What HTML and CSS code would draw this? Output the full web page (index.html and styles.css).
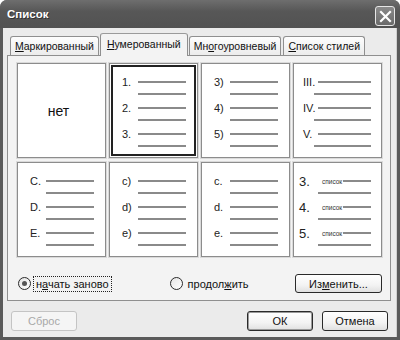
FILE: index.html
```html
<!DOCTYPE html>
<html lang="ru">
<head>
    <meta charset="UTF-8">
    <title>Список</title>
    <link rel="stylesheet" href="styles.css">
</head>
<body>

<div class="window">
    <div class="titlebar">
        <span class="title">Список</span>
        <button class="close-btn">
            <svg width="13" height="13" viewBox="0 0 13 13">
                <path d="M2 2 L11 11 M11 2 L2 11" stroke="#fff" stroke-width="2.2" stroke-linecap="square"/>
            </svg>
        </button>
    </div>

    <div class="client">
        <div class="tabs">
            <div class="tab"><u>М</u>аркированный</div>
            <div class="tab active"><u>Н</u>умерованный</div>
            <div class="tab">Мн<u>о</u>гоуровневый</div>
            <div class="tab"><u>С</u>писок стилей</div>
        </div>

        <div class="panel">
            <div class="gallery">
                <div class="cell cell-none">нет</div>

                <div class="cell selected">
                    <div class="item"><div class="item-head"><span class="num">1.</span><span class="rule"></span></div><span class="rule rule2"></span></div>
                    <div class="item"><div class="item-head"><span class="num">2.</span><span class="rule"></span></div><span class="rule rule2"></span></div>
                    <div class="item"><div class="item-head"><span class="num">3.</span><span class="rule"></span></div><span class="rule rule2"></span></div>
                </div>

                <div class="cell">
                    <div class="item"><div class="item-head"><span class="num">3)</span><span class="rule"></span></div><span class="rule rule2"></span></div>
                    <div class="item"><div class="item-head"><span class="num">4)</span><span class="rule"></span></div><span class="rule rule2"></span></div>
                    <div class="item"><div class="item-head"><span class="num">5)</span><span class="rule"></span></div><span class="rule rule2"></span></div>
                </div>

                <div class="cell roman">
                    <div class="item"><div class="item-head"><span class="num">III.</span><span class="rule"></span></div><span class="rule rule2"></span></div>
                    <div class="item"><div class="item-head"><span class="num">IV.</span><span class="rule"></span></div><span class="rule rule2"></span></div>
                    <div class="item"><div class="item-head"><span class="num">V.</span><span class="rule"></span></div><span class="rule rule2"></span></div>
                </div>

                <div class="cell">
                    <div class="item"><div class="item-head"><span class="num">C.</span><span class="rule"></span></div><span class="rule rule2"></span></div>
                    <div class="item"><div class="item-head"><span class="num">D.</span><span class="rule"></span></div><span class="rule rule2"></span></div>
                    <div class="item"><div class="item-head"><span class="num">E.</span><span class="rule"></span></div><span class="rule rule2"></span></div>
                </div>

                <div class="cell">
                    <div class="item"><div class="item-head"><span class="num">c)</span><span class="rule"></span></div><span class="rule rule2"></span></div>
                    <div class="item"><div class="item-head"><span class="num">d)</span><span class="rule"></span></div><span class="rule rule2"></span></div>
                    <div class="item"><div class="item-head"><span class="num">e)</span><span class="rule"></span></div><span class="rule rule2"></span></div>
                </div>

                <div class="cell">
                    <div class="item"><div class="item-head"><span class="num">c.</span><span class="rule"></span></div><span class="rule rule2"></span></div>
                    <div class="item"><div class="item-head"><span class="num">d.</span><span class="rule"></span></div><span class="rule rule2"></span></div>
                    <div class="item"><div class="item-head"><span class="num">e.</span><span class="rule"></span></div><span class="rule rule2"></span></div>
                </div>

                <div class="cell styled">
                    <div class="item"><div class="item-head"><span class="num">3.</span><span class="tag">список</span><span class="rule"></span></div><span class="rule rule2"></span></div>
                    <div class="item"><div class="item-head"><span class="num">4.</span><span class="tag">список</span><span class="rule"></span></div><span class="rule rule2"></span></div>
                    <div class="item"><div class="item-head"><span class="num">5.</span><span class="tag">список</span><span class="rule"></span></div><span class="rule rule2"></span></div>
                </div>
            </div>

            <div class="options">
                <label class="radio">
                    <span class="radio-dot checked"></span>
                    <span class="radio-text focused">н<u>а</u>чать заново</span>
                </label>
                <label class="radio">
                    <span class="radio-dot"></span>
                    <span class="radio-text">продол<u>ж</u>ить</span>
                </label>
                <button class="btn btn-change">Из<u>м</u>енить...</button>
            </div>
        </div>

        <div class="footer">
            <button class="btn" disabled>Сброс</button>
            <button class="btn btn-default">ОК</button>
            <button class="btn">Отмена</button>
        </div>
    </div>
</div>

</body>
</html>
```

FILE: styles.css
```css
body {
    margin: 0;
    padding: 0;
    background-color: white;
    font-family: "Liberation Sans", Arial, sans-serif;
    font-size: 11px;
    color: #111;
}
u {
    text-decoration: underline;
    text-underline-offset: 1px;
}
.window {
    width: 400px;
    height: 340px;
    box-sizing: border-box;
    display: flex;
    flex-direction: column;
    padding: 0 3px 3px 3px;
    background-color: #5a5a5a;
    border-radius: 7px 7px 0 0;
}
.titlebar {
    height: 28px;
    flex: none;
    display: flex;
    align-items: center;
    background: linear-gradient(#6e6e6e, #575757 40%, #525252);
    margin: 0 -3px;
    padding: 0 5px 0 7px;
    border-radius: 7px 7px 0 0;
}
.title {
    flex: 1;
    color: white;
    font-weight: bold;
    font-size: 11.5px;
    text-shadow: 1px 1px 0 #333;
}
.close-btn {
    width: 20px;
    height: 20px;
    margin-top: 4px;
    padding: 0;
    display: flex;
    align-items: center;
    justify-content: center;
    border: 1px solid #e6e6e6;
    border-radius: 3px;
    background: linear-gradient(#8a8a8a, #6a6a6a);
}
.client {
    flex: 1;
    background-color: #ebebeb;
    padding: 5px 5px 0 4px;
    border-right: 1px solid #cfcfcf;
}
.tabs {
    display: flex;
    align-items: flex-end;
    height: 23px;
    padding-left: 3px;
    gap: 2px;
}
.tab {
    height: 18px;
    margin-bottom: 1px;
    padding: 0 4px;
    display: flex;
    align-items: center;
    font-size: 10.5px;
    border: 1px solid #8f8f8f;
    border-bottom: none;
    border-radius: 3px 3px 0 0;
    background: linear-gradient(#fdfdfd, #ececec);
}
.tab.active {
    height: 23px;
    margin: 0 -1px;
    padding: 0 6px 3px 6px;
    box-sizing: border-box;
    position: relative;
    z-index: 1;
    background: #f3f3f3;
    border-top-color: #9a9a9a;
}
.panel {
    height: 246px;
    box-sizing: border-box;
    margin-top: -1px;
    padding: 7px 8px 0 9px;
    border: 1px solid #8f8f8f;
    background-color: #f3f3f3;
}
.gallery {
    display: grid;
    grid-template-columns: repeat(4, 89px);
    grid-template-rows: 95px 95px;
    gap: 4px 3px;
}
.cell {
    box-sizing: border-box;
    background-color: white;
    border: 1px solid #8c8c8c;
    box-shadow: 0 0 0 1px #dadada;
    padding: 11px 0 0 12px;
}
.cell.selected {
    box-shadow: inset 0 0 0 1px white, inset 0 0 0 3px #222, 0 0 0 1px #dadada;
}
.cell-none {
    display: flex;
    align-items: center;
    justify-content: center;
    padding: 0 6px 0 0;
    font-size: 14px;
}
.item {
    height: 26px;
}
.item-head {
    display: flex;
    align-items: center;
    height: 14px;
}
.num {
    width: 16px;
    flex: none;
    font-size: 11px;
    color: #222;
}
.rule {
    display: block;
    width: 48px;
    height: 2px;
    background-color: #8a8a8a;
}
.rule2 {
    margin: 4px 0 0 16px;
}
.roman {
    padding-left: 9px;
}
.roman .num {
    width: 15px;
}
.roman .item-head .rule {
    width: 53px;
}
.roman .rule2 {
    width: 57px;
    margin-left: 11px;
}
.styled {
    padding-left: 5px;
}
.styled .num {
    width: 23px;
    font-size: 13px;
}
.styled .tag {
    width: 21px;
    font-size: 6.5px;
    color: #333;
}
.styled .item-head .rule {
    width: 28px;
}
.styled .rule2 {
    width: 53px;
    margin-left: 19px;
}
.options {
    display: flex;
    align-items: center;
    height: 19px;
    margin-top: 17px;
    padding-left: 1px;
}
.radio {
    display: flex;
    align-items: center;
    gap: 2px;
}
.radio + .radio {
    margin-left: 58px;
}
.radio-dot {
    width: 11px;
    height: 11px;
    border: 1px solid #2a2a2a;
    border-radius: 50%;
    background: linear-gradient(135deg, #e4e4e4, #ffffff);
    display: flex;
    align-items: center;
    justify-content: center;
}
.radio-dot.checked::after {
    content: "";
    width: 5px;
    height: 5px;
    border-radius: 50%;
    background-color: #555;
}
.radio-text {
    padding: 1px 2px;
    border: 1px solid transparent;
}
.radio-text.focused {
    border: 1px dotted #222;
}
.btn {
    width: 66px;
    height: 20px;
    padding: 0;
    font-family: "Liberation Sans", Arial, sans-serif;
    font-size: 11px;
    color: #111;
    border: 1px solid #2a2a2a;
    border-radius: 3px;
    background: linear-gradient(#ffffff, #f3f3f3 60%, #e0e0e0);
}
.btn:disabled {
    color: #a8a8a8;
    border-color: #c4c4c4;
    background: #f5f5f5;
}
.btn-change {
    width: 87px;
    height: 19px;
    margin-left: auto;
}
.btn-default {
    box-shadow: inset 0 0 0 1px #9a9a9a;
}
.footer {
    display: flex;
    gap: 9px;
    margin-top: 10px;
    padding: 0 3px 0 4px;
}
.footer .btn:first-child {
    margin-right: auto;
}
```
